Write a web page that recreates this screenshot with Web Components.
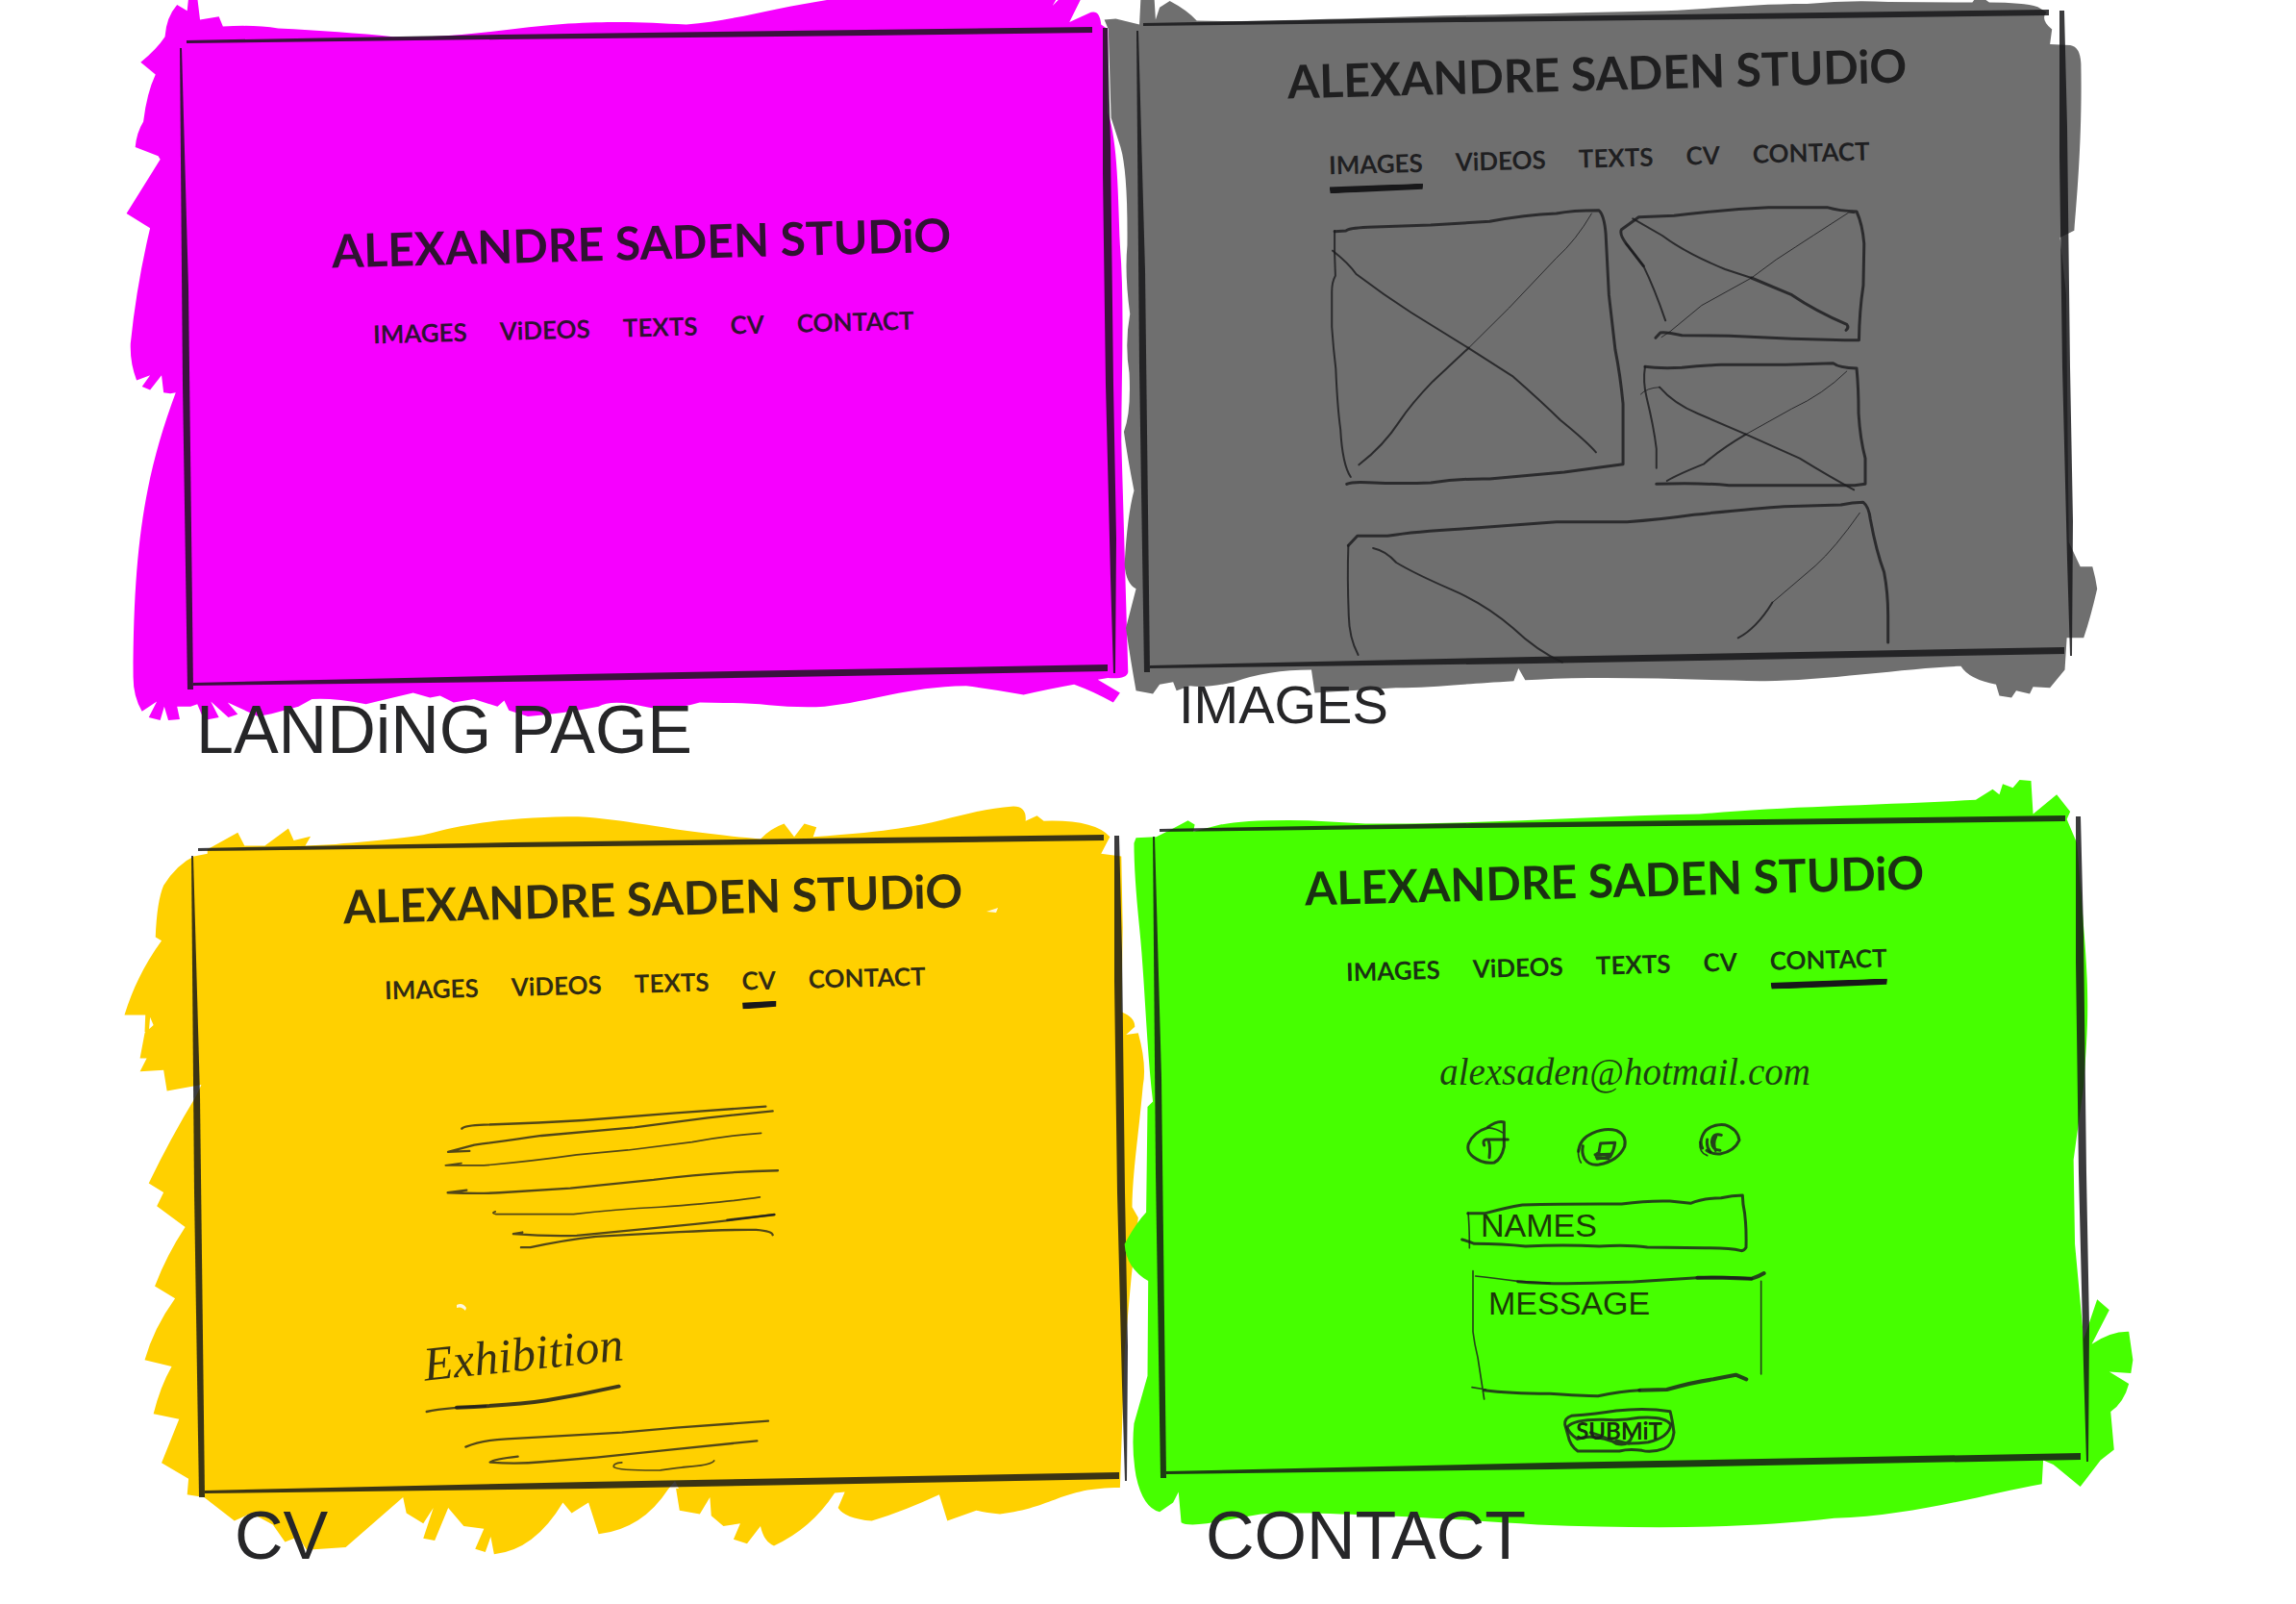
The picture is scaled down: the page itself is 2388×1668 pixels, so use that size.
<!DOCTYPE html>
<html lang="en">
<head>
<meta charset="utf-8">
<meta name="viewport" content="width=device-width, initial-scale=1">
<title>Alexandre Saden Studio – wireframes</title>
<style>
  body { margin: 0; background: #fff; color: #222; font-family: "Liberation Sans", Arial, sans-serif; overflow-x: hidden; }
</style>
</head>
<body>
<wire-board>
  <site-frame style="--lead: 220px; --shift: 24px; --screen: 716px; --inset: 24px">
    <sketch-art slot="art" name="landing"></sketch-art>
    <site-header></site-header>
    <span slot="caption">LANDiNG PAGE</span>
  </site-frame>
  <site-frame style="--lead: 44px; --shift: 36px; --screen: 689px; --inset: 46px; --caption-size: 56px">
    <sketch-art slot="art" name="images"></sketch-art>
    <site-header active="images"></site-header>
    <image-gallery></image-gallery>
    <span slot="caption">IMAGES</span>
  </site-frame>
  <site-frame style="--lead: 68px; --screen: 720px; --inset: 64px">
    <sketch-art slot="art" name="cv"></sketch-art>
    <site-header active="cv"></site-header>
    <cv-content></cv-content>
    <span slot="caption">CV</span>
  </site-frame>
  <site-frame style="--lead: 49px; --screen: 720px; --inset: 74px">
    <sketch-art slot="art" name="contact"></sketch-art>
    <site-header active="contact"></site-header>
    <contact-content></contact-content>
    <span slot="caption">CONTACT</span>
  </site-frame>
</wire-board>

<script>
const define = (name, render) => customElements.define(name, class extends HTMLElement {
  constructor() { super(); this.attachShadow({ mode: 'open' }); }
  connectedCallback() { this.shadowRoot.innerHTML = render(this); }
});

define('wire-board', () => `
  <style>
    :host { display: grid; grid-template-columns: 1fr 1fr; grid-auto-rows: 1fr; min-height: 100vh; padding: 0 208px 0 180px; box-sizing: border-box; overflow: hidden; }
  </style>
  <slot></slot>`);

define('site-frame', () => `
  <style>
    :host { display: flex; flex-direction: column; position: relative; min-width: 0; }
    ::slotted(sketch-art) { position: absolute; inset: 0; }
    .screen { position: relative; display: flex; flex-direction: column; min-height: var(--screen); padding: var(--lead) var(--shift, 0) 0 0; box-sizing: border-box; }
    h2 { position: relative; margin: 0; padding-left: var(--inset); font-weight: 400; font-size: var(--caption-size, 70px); line-height: 86px; color: #262628; }
  </style>
  <slot name="art"></slot>
  <main class="screen"><slot></slot></main>
  <h2><slot name="caption"></slot></h2>`);

/* Brushed colour behind each screen and the inked screen border. */
const ART = {
  landing: {
    box: '180 0 1000 834', fill: '#f600ff', map: 'translate(100 0) scale(.7015 .5102)', dx: 0, dy: 0,
    d: 'M120,10 L135,22 L137,-5 L150,-5 L154,40 L182,34 L188,54 Q235,50 270,58 C330,62 390,68 440,75 C540,80 620,55 700,48 C780,42 820,46 875,50 C950,42 1020,10 1110,-5 L1425,-5 L1418,12 L1430,-5 L1460,-2 L1443,45 L1475,25 Q1488,20 1490,50 L1500,60 L1500,230 C1515,290 1515,400 1518,500 C1525,620 1520,760 1520,900 L1530,1370 Q1528,1385 1500,1382 L1485,1385 L1518,1412 L1508,1432 Q1480,1410 1450,1395 Q1410,1405 1375,1416 Q1330,1405 1290,1398 C1200,1400 1150,1430 1080,1440 C1020,1445 980,1430 930,1433 L895,1432 Q850,1450 820,1442 L795,1435 Q760,1428 745,1440 Q690,1455 640,1460 L612,1448 L605,1428 L595,1440 L560,1425 L530,1432 L510,1418 L495,1422 L470,1412 Q430,1425 400,1435 Q350,1422 320,1425 L300,1440 L260,1455 L240,1460 L195,1432 L210,1456 L196,1462 L170,1430 L182,1462 L160,1468 L150,1435 L140,1440 L120,1440 L124,1466 L107,1468 L101,1440 L95,1468 L78,1462 L90,1430 L68,1450 Q55,1420 55,1380 C55,1100 75,960 118,800 L110,802 L100,800 L97,765 L80,795 L68,788 L80,765 L60,775 Q50,740 51,700 Q60,580 80,465 L45,435 L95,325 L92,318 L58,300 Q60,270 70,248 Q75,190 88,152 L66,127 Q90,100 102,75 Q104,35 120,10Z',
    extra: ''
  },
  images: {
    box: '1180 0 1000 834', fill: '#6f6f6f', map: 'translate(1150 0) scale(.7015 .5102)', dx: 995, dy: -18,
    d: 'M52,-5 L72,-5 L74,40 L80,15 L95,2 Q120,20 135,42 C200,45 280,40 350,38 L500,32 Q700,26 830,22 C900,18 960,8 1040,8 Q1100,0 1160,4 L1285,5 L1290,-5 L1300,-5 L1310,5 Q1360,5 1382,14 L1395,25 Q1385,40 1403,60 L1400,90 L1430,92 Q1445,95 1446,130 C1448,280 1440,400 1436,470 L1415,484 L1424,600 L1428,1105 L1445,1155 L1463,1155 Q1468,1180 1470,1200 Q1460,1260 1450,1300 L1425,1300 L1422,1365 L1400,1402 L1375,1400 L1370,1414 L1350,1408 L1343,1422 L1325,1418 L1320,1395 Q1280,1385 1268,1358 C1200,1360 1050,1390 970,1388 C850,1385 750,1378 640,1385 L622,1386 L612,1362 L605,1388 C520,1395 480,1402 430,1402 L310,1412 L305,1365 Q240,1365 190,1390 Q150,1403 125,1398 L105,1408 L100,1390 L80,1395 L70,1414 L45,1408 Q35,1330 30,1280 L45,1200 Q30,1190 28,1150 Q32,1050 42,1000 Q32,930 27,880 Q38,840 35,760 Q28,700 36,640 Q28,560 32,500 Q33,350 22,300 L8,240 L4,60 L-2,40 L15,38 L50,50Z',
    extra: ''
  },
  cv: {
    box: '180 834 1000 834', fill: '#ffd000', map: 'translate(100 800) scale(.7015 .5485)', dx: 12, dy: 840,
    d: 'M145,165 L165,160 L165,152 L210,120 L220,145 L250,145 L285,112 L293,135 L318,127 L310,145 L355,142 C420,135 480,128 500,120 C560,98 640,90 715,90 C790,95 850,118 985,132 Q1000,112 1020,103 L1035,128 L1050,103 L1068,110 L1063,128 Q1150,120 1190,112 C1260,100 1300,75 1360,70 Q1380,70 1378,98 L1395,88 L1405,98 Q1480,95 1503,128 L1490,160 L1520,165 L1522,300 L1520,460 Q1540,470 1540,488 L1527,503 L1545,500 Q1558,560 1552,600 C1545,700 1537,760 1536,830 L1545,850 L1535,960 L1525,1100 L1518,1362 C1430,1362 1420,1400 1340,1412 Q1320,1410 1305,1405 L1262,1425 L1250,1375 Q1200,1405 1150,1425 Q1110,1420 1100,1400 L1110,1370 L1095,1372 Q1060,1440 1005,1472 Q990,1465 985,1435 L965,1468 L945,1460 L955,1430 L930,1435 L912,1415 L910,1380 L895,1412 L865,1405 L858,1350 L848,1365 Q810,1440 745,1450 L730,1390 L705,1410 L692,1390 Q650,1480 590,1488 L585,1455 L577,1484 L562,1478 L575,1440 L545,1435 L522,1400 L502,1462 L485,1458 L500,1400 L485,1430 L460,1410 L455,1380 L370,1475 L312,1480 L300,1455 L280,1465 L262,1432 L230,1410 L205,1425 L160,1380 L135,1375 L137,1345 L97,1315 L123,1232 L85,1222 Q95,1170 112,1132 L72,1120 Q85,1060 117,1003 L87,980 Q105,920 132,868 L90,828 L100,802 L78,785 Q110,700 148,620 L156,598 L105,610 L100,570 L65,573 L75,548 L65,548 L72,500 L85,485 L80,470 L78,500 L72,498 L73,466 L42,466 Q60,390 97,325 L88,318 Q90,250 100,220 Q120,180 145,165Z',
    extra: '<path d="M1026,948 l12,-4 l-2,5z M475,1357 q6,-3 10,3 l-1,3 q-4,-5 -9,-3z M697,1548 l5,-8 l4,8z" fill="#fff8e0"/>'
  },
  contact: {
    box: '1180 834 1000 834', fill: '#46ff00', map: 'translate(1150 800) scale(.7015 .5485)', dx: 1012, dy: 820,
    d: 'M45,130 L75,128 L100,112 L122,97 L132,105 L130,118 L170,105 Q210,95 300,97 L385,103 C550,105 700,90 880,85 C1000,70 1150,68 1290,58 L1315,38 L1325,48 L1330,28 L1345,35 L1355,20 L1372,22 L1375,85 L1410,48 L1430,80 L1425,95 L1440,140 L1450,300 C1460,450 1455,500 1450,600 L1435,740 L1437,900 L1450,1080 L1470,1005 L1488,1025 L1462,1090 Q1490,1065 1517,1066 L1523,1120 L1520,1145 L1488,1142 L1517,1165 Q1510,1200 1490,1218 L1495,1290 L1475,1310 L1445,1360 L1405,1318 L1390,1310 L1388,1355 C1300,1375 1200,1415 1080,1420 C950,1440 800,1440 640,1432 C500,1420 300,1405 230,1412 L150,1430 Q120,1435 112,1428 L108,1370 L100,1390 L80,1408 Q55,1400 45,1340 Q38,1290 42,1240 L62,1150 L63,970 Q30,945 28,900 Q45,860 60,840 L62,640 L70,630 C60,520 58,400 50,300 Q42,200 42,140Z',
    extra: ''
  }
};

define('sketch-art', el => {
  const a = ART[el.getAttribute('name')];
  return `
  <style>
    :host { display: block; }
    svg { display: block; width: 100%; height: 100%; overflow: visible; }
  </style>
  <svg viewBox="${a.box}" preserveAspectRatio="none" aria-hidden="true">
    <path fill="${a.fill}" transform="${a.map}" d="${a.d}"/>
    ${a.extra}
    <g transform="translate(${a.dx} ${a.dy})" fill="#161618" fill-opacity=".84">
      <path d="M194,42 L520,36 L900,31 L1136,28 V34 L900,37 L520,41 L194,45Z"/>
      <path d="M187,50 H189 L196,300 L201,717 H195 L190,400Z"/>
      <path d="M1147,29 H1152 L1155,150 L1158,400 L1161,560 L1160,700 H1158 L1155,600 L1150,400 L1147,180Z"/>
      <path d="M201,710 L600,701 L1152,691 V698 L600,708 L201,713Z"/>
    </g>
  </svg>`;
});

define('site-header', el => {
  const active = el.getAttribute('active');
  const links = [['images', 'IMAGES'], ['videos', 'ViDEOS'], ['texts', 'TEXTS'], ['cv', 'CV'], ['contact', 'CONTACT']];
  return `
  <style>
    :host { display: flex; flex-direction: column; align-items: center; gap: 34px; transform: rotate(-1.5deg); font-family: Lato, "Liberation Sans", sans-serif; color: rgba(20,20,22,.88); white-space: nowrap; }
    h1 { margin: 0; font-size: 48px; line-height: 64px; font-weight: 700; }
    nav { display: flex; gap: 34px; height: 44px; align-items: center; }
    a { position: relative; color: inherit; text-decoration: none; font-size: 26px; line-height: 36px; font-weight: 700; }
    a[aria-current]::after { content: ""; position: absolute; left: 0; right: 0; top: 40px; height: 8px; background: #18181a; clip-path: polygon(0 15%, 100% 0, 99% 75%, 1% 100%); }
  </style>
  <h1>ALEXANDRE SADEN STUDiO</h1>
  <nav>${links.map(([id, text]) => `<a href="#${id}"${id === active ? ' aria-current="page"' : ''}>${text}</a>`).join('')}</nav>`;
});

const INK = `fill: none; stroke: #1c1c1e; stroke-opacity: .82; stroke-linecap: round; stroke-linejoin: round;`;

define('image-gallery', () => `
  <style>
    :host { display: grid; grid-template-columns: 300fr 256fr; grid-template-rows: 150px 150px 176px; width: min(100%, 556px); margin: 28px auto 0; }
    svg { display: block; width: 100%; height: 100%; overflow: visible; }
    .tall { grid-row: span 2; }
    .wide { grid-column: span 2; }
    path { ${INK} stroke-width: 3; vector-effect: non-scaling-stroke; }
    .thin { stroke-width: 1; }
    .mid { stroke-width: 2; }
  </style>
  <svg class="tall" viewBox="65 72 735 900" preserveAspectRatio="none" role="img" aria-label="Image placeholder">
    <path class="mid" d="M75,150 V220 L77,290 Q68,310 68,340 V450 Q72,520 78,580 Q82,700 90,770 Q95,880 116,918"/>
    <path d="M75,152 L104,150 Q110,142 160,139 L320,132 L470,121 Q560,100 640,96 Q680,86 748,86 Q762,100 766,160 L774,350 L790,520 Q803,600 810,690 V878 L660,903 L470,924 Q400,922 320,936 Q240,940 160,935 Q120,932 106,940"/>
    <path class="mid" d="M70,212 Q110,250 130,285 Q200,350 270,405 L415,515 L530,605 Q600,680 650,740 Q720,810 741,841"/>
    <path class="thin" d="M730,96 Q690,180 640,235 L520,390 L417,515"/>
    <path class="mid" d="M417,515 L325,620 Q270,690 240,745 Q200,820 137,880"/>
  </svg>
  <svg viewBox="800 72 627 450" preserveAspectRatio="none" role="img" aria-label="Image placeholder">
    <path class="mid" d="M918,430 Q890,330 862,260 L818,190"/>
    <path d="M862,260 L818,190 Q800,160 806,146 L850,107 L940,103 Q1060,84 1180,77 L1330,77 Q1360,88 1405,90 Q1420,130 1424,190 L1422,320 Q1412,400 1411,491 L1375,491 L1240,487 L1080,478 L960,476 Q915,464 905,468 L893,484"/>
    <path class="mid" d="M835,112 L910,165 Q970,220 1070,270 L1137,297"/>
    <path d="M1137,297 L1240,350 Q1300,400 1380,442 Q1386,452 1378,460"/>
    <path class="thin" d="M1400,95 L1385,93 Q1300,160 1200,240 L1137,297 L1010,383 L930,464 L908,482"/>
  </svg>
  <svg viewBox="800 522 627 450" preserveAspectRatio="none" role="img" aria-label="Image placeholder">
    <path class="mid" d="M866,574 Q860,620 870,670 Q888,760 895,830 V890"/>
    <path d="M866,574 Q900,580 960,577 Q1010,570 1060,568 H1225 L1345,563 Q1360,578 1405,579 Q1410,640 1410,720 Q1414,800 1427,860 V940 L1400,944 H1080 Q1000,935 895,940"/>
    <path class="thin" d="M1380,588 Q1320,660 1240,705 L1123,785"/>
    <path class="mid" d="M1123,785 Q1060,830 1015,878 Q950,910 922,930"/>
    <path class="thin" d="M855,660 Q870,640 903,638"/>
    <path class="mid" d="M903,638 Q940,690 1000,720 L1123,785 L1260,860 Q1340,920 1398,958"/>
  </svg>
  <svg class="wide" viewBox="65 972 1362 528" preserveAspectRatio="none" role="img" aria-label="Image placeholder">
    <path class="mid" d="M135,1473 Q112,1420 111,1350 Q107,1230 110,1132"/>
    <path d="M110,1132 L133,1102 H210 Q280,1088 400,1080 L640,1058 H820 Q900,1052 990,1036 Q1150,1015 1220,1010 L1365,1005 Q1395,997 1422,997 Q1436,1010 1440,1050 Q1455,1150 1475,1215 Q1485,1280 1485,1350 V1434"/>
    <path class="mid" d="M173,1140 Q205,1148 232,1185 Q280,1220 370,1268 Q460,1315 530,1390 Q590,1460 655,1496"/>
    <path class="thin" d="M1413,1030 Q1350,1140 1300,1195 L1190,1310"/>
    <path class="mid" d="M1190,1310 Q1150,1390 1103,1420"/>
  </svg>`);

define('cv-content', () => `
  <style>
    :host { display: flex; flex-direction: column; align-items: flex-start; margin: 103px 0 0 26%; }
    svg { display: block; overflow: visible; }
    path { ${INK} stroke-width: 7; stroke-opacity: .76; }
    .thin { stroke-width: 5; }
    .bold { stroke-width: 12; stroke-opacity: .84; }
    .bio { width: 353px; margin-left: 20px; }
    h3 { margin: 78px 0 0; font: italic 400 50px/60px "Liberation Serif", serif; color: rgba(20,20,22,.85); transform: rotate(-6deg); }
    .rule { width: 210px; }
    .dates { width: 318px; margin: 4px 0 0 42px; }
  </style>
  <svg class="bio" viewBox="120 80 1060 460" role="img" aria-label="Biography text">
    <path d="M181,160 Q190,150 250,148 Q420,143 560,134 L850,111 L1130,91"/>
    <path d="M205,230 L138,233 L220,211 Q340,195 430,182 L720,156 L950,126 L1152,105"/>
    <path class="thin" d="M180,268 L130,275 H250 Q400,262 540,242 L700,227 L900,202 Q1020,180 1116,174"/>
    <path d="M196,352 L137,360 Q240,364 300,360 L520,346 L780,320 Q960,296 1168,291"/>
    <path class="thin" d="M286,419 Q270,424 288,427 H530 Q660,412 800,405 Q1010,390 1112,374"/>
    <path d="M370,484 L342,489 Q450,497 540,494 L850,464 Q1000,450 1157,428"/>
    <path d="M1010,445 L1157,429"/>
    <path d="M366,531 H395 Q500,508 600,497 L860,483 Q1000,475 1100,476 Q1150,480 1152,492"/>
  </svg>
  <h3>Exhibition</h3>
  <svg class="rule" viewBox="45 955 630 95" aria-hidden="true">
    <path d="M56,1045 Q120,1031 240,1028"/>
    <path class="bold" d="M150,1032 Q330,1025 430,1010 Q540,992 656,966"/>
  </svg>
  <svg class="dates" viewBox="185 1065 955 175" role="img" aria-label="Exhibition dates">
    <path d="M192,1157 Q240,1136 320,1132 L680,1112 L850,1097 L1137,1076"/>
    <path d="M355,1187 Q280,1195 268,1205 Q350,1212 430,1204 L600,1190 L830,1166 L1102,1138"/>
    <path class="thin" d="M680,1206 Q650,1208 655,1220 Q670,1231 800,1230 Q850,1222 900,1218 Q960,1212 968,1200"/>
  </svg>`);

define('contact-content', () => `
  <style>
    :host { display: flex; flex-direction: column; align-items: center; margin-top: 60px; }
    svg { display: block; overflow: visible; }
    path { ${INK} stroke-width: 9; }
    .fine { stroke-width: 5; }
    .heavy { stroke-width: 12; }
    .email { margin-left: 20px; font: italic 400 39px/60px "Liberation Serif", serif; color: rgba(20,20,22,.82); text-decoration: none; }
    .social { display: flex; justify-content: space-between; width: 292px; margin: 18px 20px 0 0; }
    .social svg { width: 52px; height: 52px; }
    form { display: flex; flex-direction: column; align-items: center; margin: 24px 0 0; }
    .field { position: relative; display: flex; box-sizing: border-box; color: #1c3808; font-size: 34px; line-height: 40px; }
    .field svg, button svg { position: absolute; inset: 0; width: 100%; height: 100%; pointer-events: none; }
    .name { width: 300px; height: 64px; margin-right: 20px; padding: 15px 10px 0 20px; }
    .message { width: 304px; height: 140px; margin: 18px 0 0 8px; padding: 14px 10px 0 16px; }
    input, textarea { flex: 1; min-width: 0; padding: 0 0 0 8px; border: 0; outline: 0; resize: none; background: none; color: inherit; font: inherit; }
    input { height: 40px; }
    button { position: relative; width: 116px; height: 50px; margin: 2px 0 0 8px; padding: 0; border: 0; background: none; font: 700 24px/48px Lato, "Liberation Sans", sans-serif; color: #1a2c10; }
  </style>
  <a class="email" href="mailto:alexsaden@hotmail.com">alexsaden@hotmail.com</a>
  <div class="social">
    <a href="#facebook" aria-label="Facebook"><svg viewBox="135 312 156 156">
      <path d="M205,340 Q235,318 256,324 V400 Q248,440 225,450 Q190,455 160,432 Q138,415 145,392 Q160,355 205,341"/>
      <path class="fine" d="M205,341 Q235,345 250,356"/><path d="M194,396 Q188,380 200,378 H268 M208,384 Q214,400 210,434"/></svg></a>
    <a href="#instagram" aria-label="Instagram"><svg viewBox="483 312 156 156">
      <path d="M490,398 Q485,420 495,438 Q510,460 540,456 Q600,445 620,400 Q628,365 595,350 Q560,340 520,358 Q480,375 476,415"/>
      <path class="fine" d="M476,410 Q474,435 484,450"/><path d="M545,390 L590,388 Q588,410 575,432 L535,438 Q525,425 540,418 L545,390 M528,425 L575,424 M533,432 L570,438"/></svg></a>
    <a href="#copyright" aria-label="Copyright"><svg viewBox="855 312 156 156">
      <path d="M875,405 Q862,380 885,350 Q910,328 945,332 Q985,345 990,380 Q975,415 930,423 Q905,425 888,412"/>
      <path class="fine" d="M867,385 Q864,420 890,428"/><path d="M934,364 Q908,355 904,385 Q905,410 930,412 M918,366 Q906,390 916,412 M890,378 Q886,400 900,416"/></svg></a>
  </div>
  <form>
    <div class="field name">
      <svg viewBox="120 540 900 192" preserveAspectRatio="none" aria-hidden="true">
        <path d="M140,608 H195 Q260,590 310,582 Q450,578 620,579 Q700,568 770,570 L835,577 Q870,562 930,560 Q965,552 997,552 L999,580 Q1010,630 1008,715 Q1000,728 990,724 Q960,715 880,716 L700,714 Q640,706 550,711 Q440,705 320,711 Q250,704 160,703 Q140,695 122,690"/>
        <path class="fine" d="M141,606 Q145,650 145,716"/>
      </svg>
      <label for="name">NAMES</label><input id="name" type="text">
    </div>
    <div class="field message">
      <svg viewBox="160 788 912 420" preserveAspectRatio="none" aria-hidden="true">
        <path class="fine" d="M160,790 V980 Q165,1020 175,1060 L195,1190 M157,1153 L200,1160 M1059,822 V1112 M168,806 Q220,812 300,822 L400,828"/>
        <path d="M300,823 Q400,832 530,828 L660,824 L860,811 Q940,808 1030,814"/>
        <path class="heavy" d="M860,811 H940 L1030,814 Q1050,808 1068,797"/>
        <path d="M195,1162 Q270,1172 400,1173 Q500,1180 550,1180 Q620,1165 680,1162"/>
        <path class="heavy" d="M680,1162 L765,1160 Q850,1136 910,1128 L980,1114 L1013,1128"/>
      </svg>
      <label for="message">MESSAGE</label><textarea id="message"></textarea>
    </div>
    <button type="button">
      <svg viewBox="435 1220 348 150" aria-hidden="true">
        <path d="M440,1275 Q438,1255 460,1248 Q540,1242 600,1232 Q690,1222 768,1234 Q775,1260 780,1300 Q775,1340 750,1350 Q710,1364 680,1356 Q640,1350 610,1358 H480 Q455,1340 450,1310 L440,1275"/>
        <path d="M478,1320 Q450,1300 447,1283 Q470,1258 560,1260 Q620,1264 670,1254 Q750,1248 770,1275 Q765,1315 700,1330 Q620,1340 580,1325 Q520,1305 480,1320 M520,1300 Q570,1315 600,1335 Q640,1345 650,1310 M600,1325 L640,1335"/>
      </svg>SUBMiT</button>
  </form>`);
</script>
</body>
</html>
